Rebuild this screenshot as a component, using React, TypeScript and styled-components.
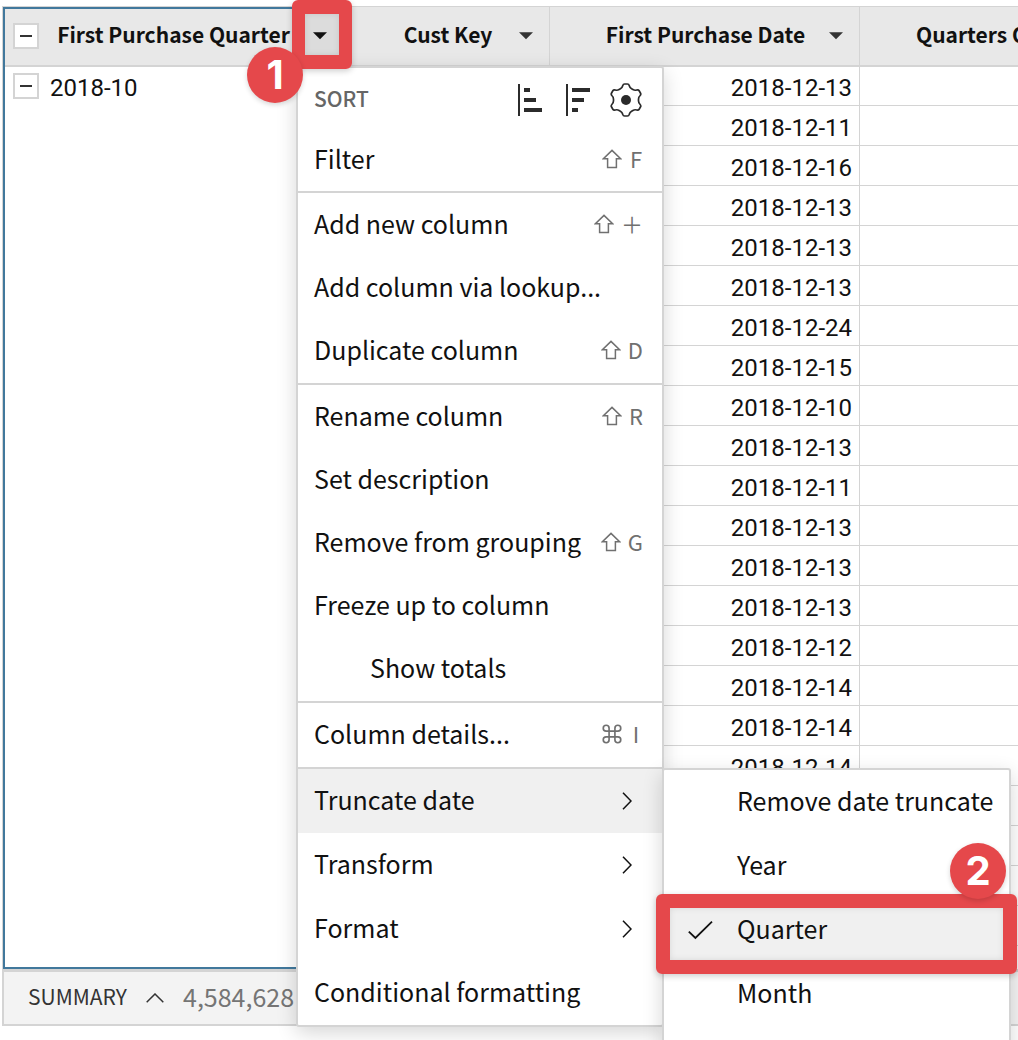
import React from "react";
import styled, { createGlobalStyle } from "styled-components";

const SANS = '"Noto Sans CJK SC", "Noto Sans", sans-serif';
const DIGITS = 'Roboto, "Liberation Sans", sans-serif';
const LINE = "#d4d4d4";
const RED = "#e5484b";
const BLUE = "#41789c";

const GlobalStyle = createGlobalStyle`
  * { box-sizing: border-box; }
  body { margin: 0; background: #fff; }
  button { border: 0; padding: 0; margin: 0; background: none; font: inherit; color: inherit; }
`;

const Page = styled.div`
  position: relative;
  display: flex;
  height: 100vh;
  padding: 6px 0 14px 2px;
  overflow: hidden;
  font-family: ${SANS};
  color: #111;
`;

const Grid = styled.main`
  display: flex;
  flex: 1;
  flex-direction: column;
  min-width: 0;
  border-top: 1px solid ${LINE};
`;

const Panes = styled.div`
  display: flex;
  flex: 1;
  min-height: 0;
  overflow: hidden;
  border-left: 1px solid ${LINE};
`;

const GroupPane = styled.section`
  flex: 0 0 342px;
  border: 2px solid ${BLUE};
`;

const GroupHeader = styled.div`
  display: flex;
  align-items: center;
  height: 58px;
  padding-bottom: 2px;
  background: #e8e8e8;
  border-bottom: 2px solid ${LINE};
`;

const GroupRow = styled.div`
  display: flex;
  align-items: center;
  height: 38px;
`;

const Collapse = styled.button`
  display: flex;
  align-items: center;
  justify-content: center;
  flex: none;
  width: 26px;
  height: 26px;
  margin: 0 11px 0 8px;
  background: #fff;
  border: 2px solid ${LINE};
`;

const Dash = styled.span`
  width: 12px;
  height: 2px;
  background: #333;
`;

const Title = styled.span`
  flex: 1;
  padding-bottom: 4px;
  text-align: center;
  font-size: 21px;
  line-height: 32px;
  font-weight: 600;
  white-space: nowrap;
`;

const CaretButton = styled.button<{ $active?: boolean }>`
  display: flex;
  align-items: center;
  justify-content: center;
  flex: none;
  width: 46px;
  height: 56px;
  background: ${(p) => (p.$active ? "#dcdcdc" : "transparent")};
`;

const GroupValue = styled.span`
  padding-top: 4px;
  font-family: ${DIGITS};
  font-size: 24px;
  line-height: 28px;
`;

const TableArea = styled.div`
  flex: 1;
  min-width: 0;
  overflow: hidden;
`;

const Table = styled.table`
  width: 100%;
  table-layout: fixed;
  border-collapse: separate;
  border-spacing: 0;
`;

const Col = styled.col<{ $width?: number }>`
  width: ${(p) => (p.$width ? `${p.$width}px` : "auto")};
`;

const HeadCell = styled.th`
  height: 60px;
  padding: 0;
  overflow: hidden;
  background: #e8e8e8;
  border-right: 1px solid ${LINE};
  border-bottom: 2px solid ${LINE};

  &:last-child { border-right: 0; }
`;

const HeadInner = styled.div<{ $start?: boolean }>`
  display: flex;
  align-items: center;
  padding-left: ${(p) => (p.$start ? 56 : 48)}px;
`;

const Cell = styled.td`
  height: 40px;
  padding: 4px 7px 0 0;
  text-align: right;
  font-family: ${DIGITS};
  font-size: 24px;
  line-height: 28px;
  white-space: nowrap;
  border-right: 1px solid ${LINE};
  border-bottom: 1px solid ${LINE};

  &:last-child { border-right: 0; }
  tr:first-child > & { height: 39px; }
`;

const Summary = styled.footer`
  display: flex;
  align-items: center;
  flex: none;
  height: 57px;
  padding-left: 24px;
  background: #f3f3f3;
  border: solid ${LINE};
  border-width: 3px 0 2px 2px;
`;

const SummaryLabel = styled.span`
  padding-bottom: 4px;
  font-size: 21px;
  line-height: 32px;
  color: #333;
`;

const SummaryToggle = styled.button`
  display: flex;
  margin: 0 19px;
`;

const SummaryValue = styled.span`
  padding-bottom: 4px;
  font-size: 25px;
  line-height: 32px;
  color: #757575;
`;

const Menu = styled.div`
  position: absolute;
  top: 66px;
  left: 296px;
  width: 368px;
  background: #fff;
  border: 2px solid ${LINE};
  border-radius: 3px;
  box-shadow: 0 6px 20px rgba(0, 0, 0, 0.16);
`;

const MenuGroup = styled.div`
  padding-bottom: 1px;
  border-bottom: 2px solid ${LINE};

  &:first-child { padding-bottom: 0; }
  &:last-child { padding-bottom: 0; border-bottom: 0; }
`;

const SortRow = styled.div`
  display: flex;
  align-items: center;
  height: 60px;
  padding: 4px 20px 0 16px;
`;

const SortLabel = styled.span`
  flex: 1;
  padding-bottom: 4px;
  font-size: 21px;
  line-height: 32px;
  font-weight: 500;
  color: #666;
`;

const IconButton = styled.button`
  display: flex;
  margin-left: 16px;
`;

const ItemSlot = styled.div`
  position: relative;
`;

const Item = styled.button<{ $tall?: boolean; $active?: boolean; $inset?: number }>`
  display: flex;
  align-items: center;
  width: 100%;
  height: ${(p) => (p.$tall ? 64 : 63)}px;
  padding: 0 18px 0 ${(p) => p.$inset ?? 16}px;
  background: ${(p) => (p.$active ? "#f0f0f0" : "transparent")};
  font-size: 25px;
  line-height: 36px;
  text-align: left;
  white-space: nowrap;
`;

const ItemLabel = styled.span`
  flex: 1;
  padding-bottom: 4px;
`;

const Keys = styled.span`
  display: flex;
  align-items: center;
  gap: 7px;
  padding: 0 1px 2px 0;
  font-size: 22px;
  line-height: 32px;
  color: #707070;
`;

const KeyCap = styled.span`
  min-width: 14px;
  padding-bottom: 2px;
  text-align: center;
`;

const SubArrow = styled.span`
  display: flex;
  margin-right: 12px;
`;

const SubMenu = styled.div`
  position: absolute;
  top: -1px;
  left: 100%;
  z-index: 1;
  width: 349px;
  padding-bottom: 32px;
  background: #fff;
  border: 2px solid ${LINE};
  border-radius: 3px;
  box-shadow: 0 6px 20px rgba(0, 0, 0, 0.16);
`;

const CheckSlot = styled.span`
  display: flex;
  flex: none;
  width: 49px;
`;

const Highlight = styled.div<{ $x: number; $y: number; $w: number; $h: number; $side: number }>`
  position: absolute;
  z-index: 2;
  top: ${(p) => p.$y}px;
  left: ${(p) => p.$x}px;
  width: ${(p) => p.$w}px;
  height: ${(p) => p.$h}px;
  border: solid ${RED};
  border-width: 14px ${(p) => p.$side}px;
  border-radius: 6px;
  box-shadow: 0 2px 6px rgba(0, 0, 0, 0.2), inset 0 0 6px rgba(0, 0, 0, 0.1);
  pointer-events: none;
`;

const Step = styled.div<{ $x: number; $y: number }>`
  position: absolute;
  z-index: 3;
  top: ${(p) => p.$y}px;
  left: ${(p) => p.$x}px;
  display: flex;
  align-items: center;
  justify-content: center;
  width: 56px;
  height: 56px;
  border-radius: 50%;
  background: ${RED};
  box-shadow: 0 2px 5px rgba(0, 0, 0, 0.16);
  font-family: Inter, sans-serif;
  font-size: 40px;
  line-height: 56px;
  font-weight: 700;
  color: #fff;
`;

const Caret = ({ color = "#333" }: { color?: string }) => (
  <svg width="14" height="8" viewBox="0 0 14 8" aria-hidden="true">
    <path d="M0 0.3H14L7 7.3Z" fill={color} />
  </svg>
);

const ShiftIcon = () => (
  <svg width="20" height="20" viewBox="0 0 20 20" aria-hidden="true">
    <path d="M10 1.4L18.6 9.8H14.4V18.6H5.6V9.8H1.4Z" fill="none" stroke="#707070" strokeWidth="1.5" />
  </svg>
);

const CommandIcon = () => (
  <svg width="20" height="20" viewBox="0 0 24 24" aria-hidden="true">
    <path
      d="M15.5 5V19A3.5 3.5 0 1 0 19 15.5H5A3.5 3.5 0 1 0 8.5 19V5A3.5 3.5 0 1 0 5 8.5H19A3.5 3.5 0 1 0 15.5 5Z"
      fill="none"
      stroke="#707070"
      strokeWidth="2"
    />
  </svg>
);

const SortAscIcon = () => (
  <svg width="32" height="32" viewBox="0 0 32 32" fill="#2b2b2b" aria-hidden="true">
    <path d="M4 0H6V32H4ZM10 4H16V8H10ZM10 14H22V18H10ZM10 24H28V28H10Z" />
  </svg>
);

const SortDescIcon = () => (
  <svg width="32" height="32" viewBox="0 0 32 32" fill="#2b2b2b" aria-hidden="true">
    <path d="M4 0H6V32H4ZM10 4H28V8H10ZM10 14H22V18H10ZM10 24H16V28H10Z" />
  </svg>
);

/* One tooth of the gear, pointing up from the centre; repeated every 60 degrees. */
const TOOTH: [number, number][] = [
  [-5.6, -11.2], [-3.8, -12.2], [-3.3, -14.2], [-2.8, -16],
  [-1.4, -16], [1.4, -16], [2.8, -16], [3.3, -14.2], [3.8, -12.2], [5.6, -11.2],
];

const gearPath = Array.from({ length: 6 }, (_, k) => {
  const a = (k * Math.PI) / 3;
  const p = TOOTH.map(
    ([x, y]) =>
      `${(x * Math.cos(a) - y * Math.sin(a)).toFixed(2)} ${(x * Math.sin(a) + y * Math.cos(a)).toFixed(2)}`
  );
  return `${k ? "L" : "M"}${p[0]}Q${p[1]} ${p[2]}Q${p[3]} ${p[4]}L${p[5]}Q${p[6]} ${p[7]}Q${p[8]} ${p[9]}`;
}).join("");

const GearIcon = () => (
  <svg width="32" height="34" viewBox="-16 -17 32 34" aria-hidden="true">
    <path d={`${gearPath}Z`} fill="none" stroke="#2b2b2b" strokeWidth="1.7" strokeLinejoin="round" />
    <circle r="5" fill="#2b2b2b" />
  </svg>
);

const ChevronRight = () => (
  <svg width="10" height="18" viewBox="0 0 10 18" aria-hidden="true">
    <path d="M1 0.7L9 9L1 17.3" fill="none" stroke="#111" strokeWidth="1.5" />
  </svg>
);

const ChevronUp = () => (
  <svg width="18" height="10" viewBox="0 0 18 10" aria-hidden="true">
    <path d="M0.7 9.2L9 1L17.3 9.2" fill="none" stroke="#333" strokeWidth="1.5" />
  </svg>
);

const CheckIcon = () => (
  <svg width="26" height="20" viewBox="0 0 26 20" aria-hidden="true">
    <path d="M0.8 11.6L7.4 18L24 1.6" fill="none" stroke="#111" strokeWidth="1.8" />
  </svg>
);

const DATES = [13, 11, 16, 13, 13, 13, 24, 15, 10, 13, 11, 13, 13, 13, 12, 14, 14, 14].map(
  (day) => `2018-12-${day}`
);
const ROW_COUNT = 23;

type Entry = { label: string; mark?: "shift" | "cmd"; keyName?: string; inset?: number };

const COLUMN_ACTIONS: Entry[][] = [
  [
    { label: "Add new column", mark: "shift", keyName: "＋" },
    { label: "Add column via lookup..." },
    { label: "Duplicate column", mark: "shift", keyName: "D" },
  ],
  [
    { label: "Rename column", mark: "shift", keyName: "R" },
    { label: "Set description" },
    { label: "Remove from grouping", mark: "shift", keyName: "G" },
    { label: "Freeze up to column" },
    { label: "Show totals", inset: 72 },
  ],
  [{ label: "Column details...", mark: "cmd", keyName: "I" }],
];

const TRUNCATIONS = ["Remove date truncate", "Year", "Quarter", "Month"];

const MenuEntry = ({ label, mark, keyName, inset }: Entry) => (
  <Item role="menuitem" $inset={inset}>
    <ItemLabel>{label}</ItemLabel>
    {mark && (
      <Keys>
        {mark === "shift" ? <ShiftIcon /> : <CommandIcon />}
        <KeyCap>{keyName}</KeyCap>
      </Keys>
    )}
  </Item>
);

export default function App() {
  return (
    <Page>
      <GlobalStyle />
      <Grid>
        <Panes>
          <GroupPane>
            <GroupHeader>
              <Collapse aria-label="Collapse all"><Dash /></Collapse>
              <Title>First Purchase Quarter</Title>
              <CaretButton $active aria-label="First Purchase Quarter menu"><Caret color="#111" /></CaretButton>
            </GroupHeader>
            <GroupRow>
              <Collapse aria-label="Collapse 2018-10"><Dash /></Collapse>
              <GroupValue>2018-10</GroupValue>
            </GroupRow>
          </GroupPane>
          <TableArea>
            <Table>
              <colgroup>
                <Col $width={205} />
                <Col $width={310} />
                <Col />
              </colgroup>
              <thead>
                <tr>
                  <HeadCell>
                    <HeadInner>
                      <Title>Cust Key</Title>
                      <CaretButton aria-label="Cust Key menu"><Caret /></CaretButton>
                    </HeadInner>
                  </HeadCell>
                  <HeadCell>
                    <HeadInner>
                      <Title>First Purchase Date</Title>
                      <CaretButton aria-label="First Purchase Date menu"><Caret /></CaretButton>
                    </HeadInner>
                  </HeadCell>
                  <HeadCell>
                    <HeadInner $start><Title>Quarters Of</Title></HeadInner>
                  </HeadCell>
                </tr>
              </thead>
              <tbody>
                {Array.from({ length: ROW_COUNT }, (_, i) => (
                  <tr key={i}>
                    <Cell />
                    <Cell>{DATES[i]}</Cell>
                    <Cell />
                  </tr>
                ))}
              </tbody>
            </Table>
          </TableArea>
        </Panes>
        <Summary>
          <SummaryLabel>SUMMARY</SummaryLabel>
          <SummaryToggle aria-label="Expand summary"><ChevronUp /></SummaryToggle>
          <SummaryValue>4,584,628</SummaryValue>
        </Summary>
      </Grid>

      <Menu role="menu">
        <MenuGroup>
          <SortRow>
            <SortLabel>SORT</SortLabel>
            <IconButton aria-label="Sort ascending"><SortAscIcon /></IconButton>
            <IconButton aria-label="Sort descending"><SortDescIcon /></IconButton>
            <IconButton aria-label="Sort settings"><GearIcon /></IconButton>
          </SortRow>
          <MenuEntry label="Filter" mark="shift" keyName="F" />
        </MenuGroup>
        {COLUMN_ACTIONS.map((group, i) => (
          <MenuGroup key={i}>
            {group.map((entry) => (
              <MenuEntry key={entry.label} {...entry} />
            ))}
          </MenuGroup>
        ))}
        <MenuGroup>
          <ItemSlot>
            <Item role="menuitem" $tall $active>
              <ItemLabel>Truncate date</ItemLabel>
              <SubArrow><ChevronRight /></SubArrow>
            </Item>
            <SubMenu role="menu">
              {TRUNCATIONS.map((name) => (
                <Item key={name} role="menuitem" $tall $active={name === "Quarter"} $inset={24}>
                  <CheckSlot>{name === "Quarter" && <CheckIcon />}</CheckSlot>
                  <ItemLabel>{name}</ItemLabel>
                </Item>
              ))}
            </SubMenu>
          </ItemSlot>
          <Item role="menuitem" $tall>
            <ItemLabel>Transform</ItemLabel>
            <SubArrow><ChevronRight /></SubArrow>
          </Item>
          <Item role="menuitem" $tall>
            <ItemLabel>Format</ItemLabel>
            <SubArrow><ChevronRight /></SubArrow>
          </Item>
          <Item role="menuitem" $tall>
            <ItemLabel>Conditional formatting</ItemLabel>
          </Item>
        </MenuGroup>
      </Menu>

      <Highlight $x={292} $y={0} $w={60} $h={69} $side={13} />
      <Highlight $x={656} $y={894} $w={361} $h={80} $side={14} />
      <Step $x={247} $y={47}>1</Step>
      <Step $x={950} $y={843}>2</Step>
    </Page>
  );
}
